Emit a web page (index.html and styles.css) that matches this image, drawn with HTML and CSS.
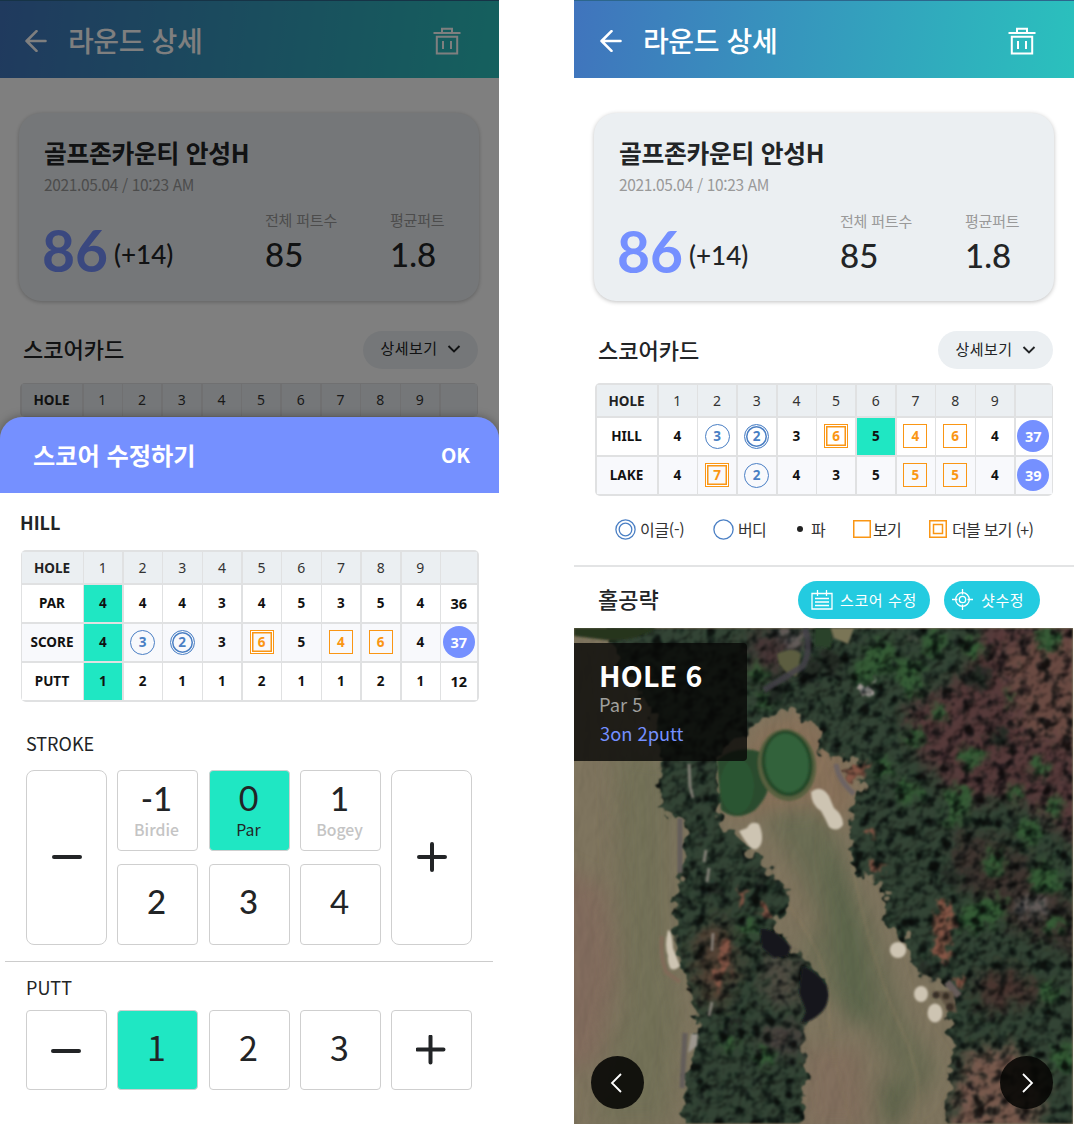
FILE: index.html
```html
<!DOCTYPE html>
<html lang="ko">
<head>
<meta charset="utf-8">
<title>라운드 상세</title>
<link rel="stylesheet" href="styles.css">
</head>
<body>
<svg class="defs" width="0" height="0" aria-hidden="true">
  <symbol id="i-back" viewBox="0 0 22 22"><path d="M20.5 11H1.5M11.5 1.2 1.6 11l9.9 9.8" fill="none" stroke="currentColor" stroke-width="2.6" stroke-linecap="round" stroke-linejoin="round"/></symbol>
  <symbol id="i-trash" viewBox="0 0 28 28"><path d="M.5 6h27M9 6V1.8h10V6M3.8 9.8h20.4v16.6H3.800zM10 14v8M18 14v8" fill="none" stroke="currentColor" stroke-width="2"/></symbol>
  <symbol id="i-down" viewBox="0 0 14 10"><path d="M1.500 2 7 7.500 12.500 2" fill="none" stroke="currentColor" stroke-width="1.900"/></symbol>
</svg>
<div class="board">

  <section class="phone phone-edit">
    <header class="bar">
      <svg class="back"><use href="#i-back"/></svg>
      <h1>라운드 상세</h1>
      <svg class="trash"><use href="#i-trash"/></svg>
    </header>
    <div class="card">
      <h2>골프존카운티 안성H</h2>
      <p class="date">2021.05.04 / 10:23 AM</p>
      <div class="stats">
        <p class="total">86</p><p class="diff">(+14)</p>
        <div class="stat sum"><span>전체 퍼트수</span><b>85</b></div>
        <div class="stat avg"><span>평균퍼트</span><b>1.8</b></div>
      </div>
    </div>
    <div class="section-head">
      <h3>스코어카드</h3>
      <button class="chip">상세보기<svg><use href="#i-down"/></svg></button>
    </div>
    <div class="table">
      <b class="h">HOLE</b><i>1</i><i>2</i><i>3</i><i>4</i><i>5</i><i>6</i><i>7</i><i>8</i><i>9</i><i></i>
    </div>
    <div class="dim"></div>

    <div class="sheet">
      <div class="sheet-head"><h2>스코어 수정하기</h2><button>OK</button></div>
      <h3 class="course">HILL</h3>
      <div class="table edit">
        <b class="h">HOLE</b><i>1</i><i>2</i><i>3</i><i>4</i><i>5</i><i>6</i><i>7</i><i>8</i><i>9</i><i></i>
        <b>PAR</b><b class="on">4</b><b>4</b><b>4</b><b>3</b><b>4</b><b>5</b><b>3</b><b>5</b><b>4</b><b class="sumcell">36</b>
        <b class="alt">SCORE</b><b class="on">4</b><b class="alt"><em class="ring">3</em></b><b class="alt"><em class="ring dbl">2</em></b><b class="alt">3</b><b class="alt"><em class="box dbl">6</em></b><b class="alt">5</b><b class="alt"><em class="box">4</em></b><b class="alt"><em class="box">6</em></b><b class="alt">4</b><b class="alt"><em class="sum-dot">37</em></b>
        <b>PUTT</b><b class="on">1</b><b>2</b><b>1</b><b>1</b><b>2</b><b>1</b><b>1</b><b>2</b><b>1</b><b class="sumcell">12</b>
      </div>
      <h4 class="stroke-label">STROKE</h4>
      <div class="keys stroke">
        <button class="tall"><svg viewBox="0 0 30 30"><path d="M2 15h26"/></svg></button>
        <button class="md named">-1<small>Birdie</small></button>
        <button class="mid on zero named">0<small>Par</small></button>
        <button class="md named">1<small>Bogey</small></button>
        <button class="tall"><svg viewBox="0 0 30 30"><path d="M2 15h26M15 2v26"/></svg></button>
        <button class="md">2</button><button class="mid md">3</button><button class="four">4</button>
      </div>
      <hr>
      <h4 class="putt-label">PUTT</h4>
      <div class="keys putt">
        <button><svg viewBox="0 0 30 30"><path d="M2 16h26"/></svg></button>
        <button class="on">1</button>
        <button class="mid">2</button>
        <button>3</button>
        <button><svg viewBox="0 0 30 30"><path d="M1.500 14.500h26M14.500 1.500v26"/></svg></button>
      </div>
    </div>
  </section>

  <section class="phone phone-view">
    <header class="bar">
      <svg class="back"><use href="#i-back"/></svg>
      <h1>라운드 상세</h1>
      <svg class="trash"><use href="#i-trash"/></svg>
    </header>
    <div class="card">
      <h2>골프존카운티 안성H</h2>
      <p class="date">2021.05.04 / 10:23 AM</p>
      <div class="stats">
        <p class="total">86</p><p class="diff">(+14)</p>
        <div class="stat sum"><span>전체 퍼트수</span><b>85</b></div>
        <div class="stat avg"><span>평균퍼트</span><b>1.8</b></div>
      </div>
    </div>
    <div class="section-head">
      <h3>스코어카드</h3>
      <button class="chip">상세보기<svg><use href="#i-down"/></svg></button>
    </div>
    <div class="table">
      <b class="h">HOLE</b><i>1</i><i>2</i><i>3</i><i>4</i><i>5</i><i>6</i><i>7</i><i>8</i><i>9</i><i></i>
      <b>HILL</b><b>4</b><b><em class="ring">3</em></b><b><em class="ring dbl">2</em></b><b>3</b><b><em class="box dbl">6</em></b><b class="on">5</b><b><em class="box">4</em></b><b><em class="box">6</em></b><b>4</b><b><em class="sum-dot">37</em></b>
      <b class="alt">LAKE</b><b class="alt">4</b><b class="alt"><em class="box dbl">7</em></b><b class="alt"><em class="ring">2</em></b><b class="alt">4</b><b class="alt">3</b><b class="alt">5</b><b class="alt"><em class="box">5</em></b><b class="alt"><em class="box">5</em></b><b class="alt">4</b><b class="alt"><em class="sum-dot">39</em></b>
    </div>
    <ul class="legend">
      <li class="eagle"><svg viewBox="0 0 21 21"><g fill="none" stroke="#4a7fc4" stroke-width="1.300"><circle cx="10.500" cy="10.500" r="9.600"/><circle cx="10.500" cy="10.500" r="6.300"/></g></svg>이글(-)</li>
      <li class="birdie"><svg viewBox="0 0 21 21"><circle cx="10.500" cy="10.500" r="9.600" fill="none" stroke="#4a7fc4" stroke-width="1.300"/></svg>버디</li>
      <li class="par"><span class="dot"></span>파</li>
      <li class="bogey"><svg class="sq" viewBox="0 0 18 18"><path d="M.75.75h16.500v16.500H.75z"/></svg>보기</li>
      <li class="double"><svg class="sq" viewBox="0 0 18 18"><path d="M.75.75h16.500v16.500H.75zM4.500 4.500h9v9h-9z"/></svg>더블 보기 (+)</li>
    </ul>
    <div class="hole-head">
      <h3>홀공략</h3>
      <button class="pill score"><svg viewBox="0 0 22 20"><path d="M1 3.500h20v15.500H1zM6.500 0v6M15.500 0v6M4 8.500h14M4 12h14M4 15.500h14" fill="none" stroke="#fff" stroke-width="1.300"/></svg>스코어 수정</button>
      <button class="pill shot"><svg viewBox="0 0 21 21"><g fill="none" stroke="#fff" stroke-width="1.300"><circle cx="10.500" cy="10.500" r="6.800"/><circle cx="10.500" cy="10.500" r="3.200"/><path d="M10.500 0v5.500M10.500 15.500V21M0 10.500h5.500M15.500 10.500H21"/></g></svg>샷수정</button>
    </div>
    <div class="map">
      <svg class="aerial" viewBox="0 0 499 496" preserveAspectRatio="none">
        <defs>
          <filter id="trees" x="0" y="0" width="499" height="496" filterUnits="userSpaceOnUse" color-interpolation-filters="sRGB">
            <feTurbulence type="fractalNoise" baseFrequency=".09" numOctaves="3" seed="7" result="n"/>
            <feDisplacementMap in="SourceGraphic" in2="n" scale="22" xChannelSelector="R" yChannelSelector="G" result="s"/>
            <feDiffuseLighting in="n" surfaceScale="2.600" lighting-color="#fff" result="l"><feDistantLight azimuth="235" elevation="50"/></feDiffuseLighting>
            <feColorMatrix in="n" values="0 2.700 2.200 0 -1.650  0 2.700 2 0 -1.500  0 2.500 2 0 -1.400  0 0 0 0 1" result="tone"/>
            <feComposite in="l" in2="tone" operator="arithmetic" k1="1.050" k2=".27" result="lt"/>
            <feComposite in="s" in2="lt" operator="arithmetic" k1="1.200" k2=".05" result="m"/>
            <feGaussianBlur in="m" stdDeviation=".9" result="mb"/>
            <feGaussianBlur in="s" stdDeviation=".8" result="sb"/>
            <feComposite in="mb" in2="sb" operator="in"/>
          </filter>
          <filter id="grass" x="0" y="0" width="499" height="496" filterUnits="userSpaceOnUse" color-interpolation-filters="sRGB">
            <feTurbulence type="fractalNoise" baseFrequency=".06 .03" numOctaves="3" seed="3" result="n"/>
            <feDiffuseLighting in="n" surfaceScale=".4" lighting-color="#fff" result="l"><feDistantLight azimuth="200" elevation="62"/></feDiffuseLighting>
            <feComposite in="SourceGraphic" in2="l" operator="arithmetic" k1="1.130"/>
          </filter>
          <filter id="soft" x="-30%" y="-30%" width="160%" height="160%"><feGaussianBlur stdDeviation="10"/></filter>
          <filter id="soft-s" x="-30%" y="-30%" width="160%" height="160%"><feGaussianBlur stdDeviation="7"/></filter>
          <filter id="soft-g" x="-30%" y="-30%" width="160%" height="160%"><feGaussianBlur stdDeviation="3"/></filter>
          <filter id="edge" x="-10%" y="-10%" width="120%" height="120%"><feGaussianBlur stdDeviation=".9"/></filter>
        </defs>
        <g filter="url(#grass)">
          <rect width="499" height="496" fill="#7d735d"/>
          <g filter="url(#soft)">
            <path d="M-20 235 30 260 42 340 24 430-20 450z" fill="#806a5b"/>
            <path d="M40 120 95 130 95 330 108 380 95 496 20 496 50 380z" fill="#727056"/>
            <path d="M190 185 255 180 270 240 300 300 330 390 365 440 340 480 290 390 250 370 215 270z" fill="#6a6c52"/>
            <path d="M250 205 266 230 290 330 296 395 275 395 264 330z" fill="#596449"/>
            <path d="M190 190 225 250 245 300 235 310 205 260z" fill="#80735d"/>
            <path d="M235 420 285 420 295 500 230 500z" fill="#806d5b"/>
            <path d="M150 190 180 100 230 82 260 110 285 170 265 200 240 175z" fill="#866f59"/>
            <path d="M307 452h24v44h-24z" fill="#5c6249"/>
          </g>
          <g fill="none" stroke="#8a7c60" stroke-opacity=".25" stroke-width="3" filter="url(#edge)"><path d="M205 265q50 60 50 110t25 130M275 220q20 110 52 180t5 106"/></g>
        </g>
        <g filter="url(#trees)">
          <path d="M20-30H530V530H363L377 448 378 408 373 391 383 371 370 354 347 351 337 331 333 311 317 301 307 288 313 274 308 261 287 248 273 224 280 174 290 150 285 131 260 132 243 124 247 101 217 84 187 91 173 104 150 120 143 131 147 184 143 194 173 218 187 234 217 264 213 288 197 293 215 315 245 345 254 364 230 398 233 444 225 530H107L110 451 123 398 115 378 117 358 107 344 98 304 102 264 110 231 110 194 83 181 87 131 80 90 40 25z" fill="#29362a"/>
          <g filter="url(#soft-s)">
            <path d="M410-10H530V240L490 205 440 170 390 175 345 130 330 80 390 50z" fill="#442f2d"/>
            <path d="M425 20 530 0V120L450 110z" fill="#553a36"/>
            <path d="M380 200 440 220 510 290V330L440 300 380 250z" fill="#302b26"/>
            <path d="M400 350 440 340 470 370 410 385z" fill="#3b2b27"/>
            <path d="M392 425 440 420 470 450 460 510H372z" fill="#5e463e"/>
            <path d="M120 310 150 290 165 330 150 380 125 370z" fill="#43342c"/>
            <path d="M190 320 225 330 228 380 190 375z" fill="#3f3c34"/>
            <path d="M175 10 220 0 210 50 175 45z" fill="#382b29"/>
            <path d="M185 400 225 395 230 430 190 420z" fill="#3a3432"/>
          </g>
          <g fill="#29482a" filter="url(#soft-g)">
            <circle cx="305" cy="30" r="18"/><circle cx="335" cy="45" r="14"/><circle cx="290" cy="45" r="11"/><circle cx="360" cy="15" r="12"/><circle cx="397" cy="129" r="11"/><circle cx="384" cy="172" r="13"/><circle cx="338" cy="60" r="10"/><circle cx="465" cy="140" r="9"/><circle cx="455" cy="205" r="11"/><circle cx="415" cy="283" r="16"/><circle cx="395" cy="292" r="12"/><circle cx="472" cy="250" r="16"/><circle cx="480" cy="295" r="10"/><circle cx="420" cy="235" r="12"/><circle cx="400" cy="22" r="11"/><circle cx="475" cy="12" r="13"/><circle cx="335" cy="165" r="12"/><circle cx="380" cy="190" r="10"/><circle cx="475" cy="365" r="10"/><circle cx="490" cy="430" r="14"/><circle cx="310" cy="140" r="10"/><circle cx="155" cy="414" r="10"/><circle cx="190" cy="430" r="10"/><circle cx="175" cy="300" r="10"/><circle cx="185" cy="45" r="9"/><circle cx="190" cy="72" r="9"/><circle cx="440" cy="165" r="8"/><circle cx="480" cy="180" r="9"/><circle cx="365" cy="85" r="9"/><circle cx="340" cy="110" r="9"/><circle cx="435" cy="70" r="6"/>
          </g>
          <g fill="#1b221f" filter="url(#soft-g)"><circle cx="255" cy="35" r="12"/><circle cx="200" cy="62" r="11"/><circle cx="235" cy="45" r="11"/><circle cx="138" cy="262" r="8"/><circle cx="375" cy="250" r="9"/><circle cx="405" cy="50" r="12"/><circle cx="425" cy="110" r="10"/><circle cx="355" cy="345" r="8"/><circle cx="160" cy="398" r="8"/><circle cx="190" cy="250" r="8"/></g>
          <path d="M362 278 378 272 380 300 372 335 358 325zM268 140l26-6-4 14-16 12zM166 260l5 4-4 18-4-4zM150 312l8 4-6 30-10 20-4-6zM185 272l10 5 2 14-12-6zM298 230l12 8-4 10-12-6zM297 200l10 4-3 8-9-4zM380 350l10-4 2 14-8 4z" fill="#6c4537" filter="url(#edge)"/>
          <path d="M440 270l30-4 6 20-30 4zM200 0l28 4 2 18-16 4zM335 5l8 4-4 8z" fill="#504a47" filter="url(#soft-g)"/>
          <path d="M284 60l14-6 4 12-12 6z" fill="#827b78"/>
        </g>
        <g filter="url(#edge)">
          <path d="M203 26q16-8 24 0l-4 22q-8 2-18-12z" fill="#5b5d3f"/>
          <path d="M241 0h18l-2 20-16-2z" fill="#2c4229"/><path d="M257 0h23l-6 16-14-6z" fill="#7a7457"/>
          <path d="M231 0q7 22-2 38L190 62" fill="none" stroke="#46414b" stroke-opacity=".8" stroke-width="6"/>
          <path d="M0 0h82q-20 14-50 12L0 8z" fill="#26351f"/>
          <path d="M262 136q2 16 18 30" fill="none" stroke="#6d6463" stroke-width="5"/>
          <path d="M106 190v55M111 405l-3 55" fill="none" stroke="#635d5a" stroke-width="5"/>
          <path d="M143 132q20-16 44-8l8 30q0 14-14 28-18 12-34 0z" fill="#294b2d"/>
          <ellipse cx="163" cy="158" rx="17" ry="28" fill="#2c5531"/>
          <ellipse cx="213" cy="137" rx="29" ry="36" transform="rotate(-8 213 137)" fill="#58603f"/><ellipse cx="213" cy="135.500" rx="25.500" ry="33" transform="rotate(-8 213 135)" fill="#274a2b"/><ellipse cx="213" cy="135" rx="21.500" ry="29.500" transform="rotate(-8 213 135)" fill="#33623a"/>
          <path d="M88 308q-2 20 4 36l14 10" fill="none" stroke="#806b58" stroke-width="4"/>
          <g fill="#cdc4b2"><path d="M237 164q10-8 18 4l5 12q10 8 9 17-6 8-14 2-4-9-8-16-10-6-10-19zM165 203l8-3q4-8 12-4 5 12 2 20-4 8-10 4-6-6-12-17zM94 302q4 0 5 18l7 18q-6 6-10 2-3-7-2-12-4-10 0-26z"/><ellipse cx="324" cy="322" rx="8.200" ry="8"/><ellipse cx="347" cy="366" rx="7" ry="8"/><ellipse cx="361" cy="385" rx="7.500" ry="9.500"/></g>
          <path d="M115 136l1 22 3 12M132 222l-2 12M135 240l-2 14M138 374l-3 14M139 305l-1 18" fill="none" stroke="#99928a" stroke-opacity=".75" stroke-width="3"/>
          <path d="M117 406l7 0-1 12-9 7z" fill="#9c968e"/>
          <path d="M186 301q14-2 31 18l-3 9-14 2-12-10zM228 338q14 4 25 20 4 16-5 26-10 10-21 11l5-12-7-18z" fill="#12181b"/>
          <path d="M373 354l12 14" stroke="#665b5a" stroke-width="7"/>
          <path d="M361 363h18l4 22-8-2z" fill="#635746"/>
          <g fill="#382e25"><circle cx="362" cy="367" r="3.500"/><circle cx="372" cy="368" r="3.500"/><circle cx="376" cy="379" r="4"/></g>
        </g>
      </svg>
      <div class="hole-info"><h2>HOLE 6</h2><p>Par 5</p><p class="result">3on 2putt</p></div>
      <button class="nav prev"><svg viewBox="0 0 12 20"><path d="M11 1 2 10l9 9"/></svg></button>
      <button class="nav next"><svg viewBox="0 0 12 20"><path d="m1 1 9 9-9 9"/></svg></button>
    </div>
  </section>
</div>
</body>
</html>
```
FILE: styles.css
```css
* { box-sizing: border-box; margin: 0; padding: 0; }
body { width: 1074px; height: 1125px; overflow: hidden; background: #fff; color: #222426; font-family: "Noto Sans CJK KR", sans-serif; }
button { font: inherit; color: inherit; border: 0; background: none; }
svg { display: block; flex: none; }
.defs { position: absolute; }
h1, h2, h3, h4 { font-weight: 500; }
ul { list-style: none; }
i, em { font-style: normal; }

.board { display: flex; justify-content: space-between; }
.phone { position: relative; height: 1125px; overflow: hidden; background: #fff; --inset: 21px; }
.phone-edit { width: 499px; --inset: 20px; }
.phone-view { width: 500px; }

.bar { display: flex; align-items: center; height: 78px; padding: 3px 0 0 calc(var(--inset) + 5px); color: #fff; background: linear-gradient(98deg, #4074bd, #2ac1bd); border-top: 1px solid #2c668c; }
.phone-edit .bar { height: 77.500px; }
.back { width: 22px; height: 22px; }
.bar h1 { width: 340px; margin-left: 21px; padding-bottom: 2px; font-size: 28px; line-height: 40px; letter-spacing: -.4px; }
.trash { width: 28px; height: 28px; margin-left: 25px; }

.card { width: 460px; height: 188px; margin: 35px 0 0 calc(var(--inset) - 1px); padding: 21px 0 0 25px; border-radius: 22px; background: #ebeff2; box-shadow: 0 1px 4px rgba(0,0,0,.25); }
.card h2 { font-size: 24.800px; line-height: 36px; font-weight: 700; letter-spacing: -.3px; }
.date { margin-top: 4px; padding-bottom: 1px; font-size: 15.500px; line-height: 20px; color: #999; letter-spacing: -.35px; }
.stats { display: flex; margin-top: 13px; }
.phone-view .stats { margin-top: 14px; }
.stats > * { flex: none; }
.total { width: 70px; margin-left: -2px; padding-top: 5px; font: 700 57px/74px Lato, sans-serif; color: #7590ff; }
.diff { width: 153px; padding: 17px 0 0 2px; font: 500 26px/58px Lato, sans-serif; }
.stat { width: 125px; }
.stat span { display: block; font-size: 15px; line-height: 23px; color: #999; letter-spacing: -.2px; }
.stat b { display: block; font: 500 33px/46px Lato, sans-serif; }

.section-head { display: flex; justify-content: space-between; align-items: center; width: 455px; height: 38px; margin: 30px 0 0 calc(var(--inset) + 3px); }
.section-head h3, .hole-head h3 { padding-bottom: 3px; font-size: 22px; line-height: 32px; }
.chip { display: flex; align-items: center; justify-content: center; width: 115px; height: 38px; padding-bottom: 4px; border-radius: 19px; background: #ebeff2; font-size: 15px; letter-spacing: .5px; }
.chip svg { width: 14px; height: 10px; margin: 3px 0 0 9px; }

.table { display: grid; grid-template-columns: 60.500px repeat(9, 38.200px) 1fr; grid-template-rows: 31.500px; grid-auto-rows: 37.500px; gap: 1.500px; width: 458px; margin: 14px 0 0 var(--inset); padding: 1.500px; background: #e0e1e2; border-radius: 5px; font-family: "Noto Sans", sans-serif; overflow: hidden; }
.table > * { display: flex; align-items: center; justify-content: center; padding-right: .5px; background: #fff; font-size: 13.500px; font-weight: 700; color: #111; }
.table > i, .table > .h { background: #ebeff2; color: #333; font-size: 14px; font-weight: 400; }
.table > .h { color: #222; font-weight: 700; font-size: 13.500px; padding-top: 1px; }
.table > .alt { background: #f8f9fc; }
.table > .on { background: #1fe7c3; }
.table .sumcell { font-size: 14.500px; }
.table em { display: flex; align-items: center; justify-content: center; flex: none; }
.ring { width: 25px; height: 25px; border: 1.500px solid #4a7fc4; border-radius: 50%; color: #4a7fc4; }
.box { width: 24px; height: 24px; border: 1.500px solid #fa9614; color: #fa9614; }
.dbl { box-shadow: inset 0 0 0 1px #fff, inset 0 0 0 2.500px currentColor; }
.sum-dot { width: 32px; height: 32px; border-radius: 50%; background: #7590ff; color: #fff; font-size: 14.500px; }

.dim { position: absolute; inset: 0; background: rgba(0,0,0,.5); }
.sheet { position: absolute; inset: 417px 0 0; background: linear-gradient(#7590ff 76px, #fff 76px); border-radius: 22px 22px 0 0; box-shadow: 0 0 10px rgba(0,0,0,.35); }
.sheet-head { display: flex; justify-content: space-between; align-items: center; height: 76px; padding: 0 29px 2px 33px; color: #fff; }
.sheet-head h2 { font-size: 24.200px; font-weight: 700; }
.sheet-head button { font-size: 20px; font-weight: 700; }
.course { margin: 16px 0 0 20px; font-size: 18px; line-height: 27px; font-weight: 700; }
.sheet .table { margin: 14px 0 0 20.500px; }
.stroke-label, .putt-label { margin: 28px 0 0 26px; font-size: 18px; line-height: 26px; font-weight: 400; }
.keys { display: grid; grid-template-columns: 81px 81px 82px 81px 81px; grid-auto-rows: 81px; gap: 13px 10px; margin: 14px 0 0 26px; }
.keys button { display: flex; flex-direction: column; align-items: center; justify-content: center; border: 1px solid #cfcfcf; border-radius: 4px; font-size: 34px; line-height: 38px; padding: 0 2px 6px 0; }
.keys .tall { grid-row: span 2; border-radius: 8px; padding: 0 0 1px; }
.keys .mid { width: 81px; justify-self: end; }
.keys .md, .keys .four { font: 500 33px/38px Lato, sans-serif; }
.keys .four { font-weight: 400; }
.keys .on { background: #1fe7c3; }
.keys .zero { font: 400 34px/38px Lato, sans-serif; }
.keys .named { padding-bottom: 0; }
.keys small { padding-top: 2px; font: 500 15.800px/22px "Noto Sans CJK KR", sans-serif; color: #c4c4c4; }
.keys .on small { color: #222426; font-weight: 400; }
.keys svg { width: 30px; height: 30px; fill: none; stroke: #222426; stroke-width: 4; stroke-linecap: round; }
.sheet hr { margin: 16px 6px 0 5px; border: 0; border-top: 1px solid #ccc; }
.putt-label { margin-top: 12px; }
.putt-label + .keys { grid-auto-rows: 80px; margin-top: 10px; }
.putt svg { margin-top: 6px; }

.legend { display: flex; align-items: center; height: 71.500px; padding: 0 0 2px 41px; border-bottom: 2px solid #e3e4e5; font-size: 16px; line-height: 22px; letter-spacing: -.7px; color: #333; }
.legend li { display: flex; align-items: center; }
.legend svg { width: 21px; height: 21px; margin-right: 4px; }
.eagle { width: 98px; letter-spacing: -.3px; }
.birdie { width: 84px; }
.par { width: 56px; }
.bogey { width: 76px; }
.dot { width: 6px; height: 6px; margin-right: 8px; border-radius: 50%; background: #222; }
.legend .sq { width: 18px; height: 18px; margin-right: 2px; fill: none; stroke: #fa9614; stroke-width: 1.500; }
.legend .double .sq { margin-right: 5px; }

.hole-head { display: flex; align-items: center; height: 61px; padding: 4px 0 0 24px; }
.hole-head h3 { width: 200px; }
.pill { display: flex; align-items: center; height: 38px; border-radius: 19px; background: #23cbe0; color: #fff; font-size: 15px; letter-spacing: .6px; }
.score { width: 132px; padding-left: 13px; }
.score svg { width: 22px; height: 20px; margin-right: 7px; }
.shot { width: 96px; margin-left: 14px; padding-left: 8px; }
.shot svg { width: 21px; height: 21px; margin-right: 8px; }

.map { position: relative; height: 496px; }
.aerial { width: 499px; height: 496px; }
.hole-info { position: absolute; left: 0; top: 15px; width: 173px; height: 118px; padding: 13px 0 0 25px; border-radius: 0 4px 4px 0; background: rgba(8,8,6,.8); color: #fff; }
.hole-info h2 { font-size: 28.500px; line-height: 38px; font-weight: 700; letter-spacing: .2px; }
.hole-info p { font-size: 18.300px; line-height: 26px; margin-top: -3px; color: #a0a09d; }
.hole-info .result { margin: 3px 0 0 1px; color: #7590ff; }
.nav { position: absolute; top: 428px; display: flex; align-items: center; justify-content: center; width: 53px; height: 53px; border-radius: 50%; background: rgba(8,8,6,.9); }
.nav svg { width: 12px; height: 20px; fill: none; stroke: #fff; stroke-width: 1.800; }
.prev { left: 17px; padding-right: 4px; }
.next { left: 426px; padding-left: 3px; }
```
